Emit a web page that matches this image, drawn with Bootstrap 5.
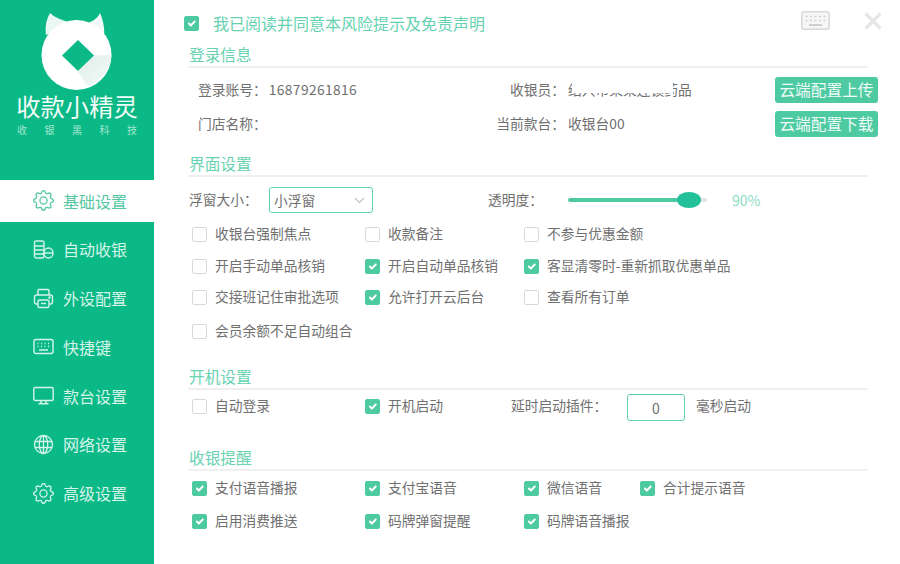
<!DOCTYPE html>
<html lang="zh-CN">
<head>
<meta charset="utf-8">
<title>基础设置</title>
<link rel="stylesheet" href="https://cdn.jsdelivr.net/npm/bootstrap@5.3.0/dist/css/bootstrap.min.css">
<style>
html,body{height:100%;margin:0;overflow:hidden;background:#fff}
body{font-family:"Noto Sans CJK SC","Liberation Sans",sans-serif;font-size:13.75px;color:#707070;font-weight:400}
.shell{width:900px;height:564px}
.side{width:154px;background:#0bb987;color:#d8f5ea}
.logo-box{height:180px;color:#eafaf4}
.logo-box svg{display:block}
.logo-name{font-size:24.3px;line-height:28px;text-align:center;color:#f2fcf8;height:28px;white-space:nowrap}
.logo-sub{font-size:10px;line-height:12px;margin-top:4px;padding:0 17px;color:#a5e6d0}
.menu-list{gap:6.75px}
.menu-row{height:42px;padding:0 0 1px 33px;gap:9px;font-size:16px;color:#d5f4e9;text-decoration:none}
.menu-row.on{background:#fff;color:#55c8a3}
.menu-row svg{width:21px;height:21px;flex:none}
.pane{padding:0 22px 0 34px}
.top-row{height:44px;padding-top:1px;margin-left:-4px}
.agree{font-size:16px;color:#66d2b0;gap:14px}
.form-check-input.tick{width:15px;height:15px;margin:2px 0 0;flex:none;border:1.5px solid #d9d9d9;border-radius:2px;background-color:#fff;box-shadow:none}
.form-check-input.tick:checked{background-color:#4dcaa2;border-color:#4dcaa2}
.tools{gap:34px;margin-right:-4px;margin-bottom:4px}
.head-line{height:24px;line-height:21px;font-size:15.7px;color:#68d2b1;border-bottom:2px solid #f0f0f0;margin-right:10px;padding-left:1px}
.login-block{margin-top:5px}
.login-row{height:34px;padding-bottom:1px}
.cell-a{width:297px;padding-left:10px}
.cell-b{width:80px;text-align:right;white-space:nowrap}
.cell-c{width:210px;padding-left:3px}
.digits{letter-spacing:.4px;margin-left:2px}
.masked{position:relative;display:inline-block}
.masked::after{content:"";position:absolute;left:4px;top:0;width:101px;height:66%;background:#fff}
.cloud-btn{width:103px;height:26px;padding:0;margin-top:1px;font-size:15.7px;line-height:26px;color:#eefbf6;background:#4dcaa2;border:0;border-radius:3px;white-space:nowrap}
.gap-ui{margin-top:12px}
.win-row{margin-top:10px;height:26px;padding-left:1px}
.win-label{width:80px;padding-bottom:1px}
.win-select{width:104px;height:26px;padding:0 22px 0 4px;font-size:13.75px;line-height:24px;color:#707070;border:1px solid #61cfad;border-radius:3px;background-image:url("data:image/svg+xml,%3csvg xmlns='http://www.w3.org/2000/svg' viewBox='0 0 16 16'%3e%3cpath fill='none' stroke='%23b5b5b5' stroke-linecap='round' stroke-width='1.5' d='m2 5 6 6 6-6'/%3e%3c/svg%3e");background-position:right 6px center;background-size:13px 11px;box-shadow:none}
.alpha-label{width:80px;margin-left:115px;padding-bottom:1px}
.alpha-range{width:139px;height:16px;padding:0;margin:0}
.alpha-range::-webkit-slider-runnable-track{height:4px;border-radius:2px;background:linear-gradient(90deg,#4dcaa2 0,#4dcaa2 88%,#e4e4e4 88%)}
.alpha-range::-webkit-slider-thumb{width:24px;height:16px;margin-top:-6px;border-radius:50%;background:#22c19a;box-shadow:none}
.alpha-num{margin-left:25px;color:#8adcc3;font-size:14px}
.opts{margin-top:5px}
.opt-row{height:32px;padding-left:4px}
.opt-row label{padding-bottom:2px}
.opt-row.up{margin-top:-1px}
.opt-row.low{height:33px;margin-top:2px}
.cell-1,.cell-2,.cell-3,.cell-4{gap:8px;white-space:nowrap;flex:none}
.cell-1{width:173px}
.cell-2{width:159px}
.cell-2.boot{width:146px}
.cell-3{width:116px}
.boot-row label,.delay-label,.delay-unit{padding-bottom:2px}
.delay-label{width:116px}
.delay-input{width:58px;height:27px;padding:0;margin-top:2px;text-align:center;font-size:14px;color:#707070;border:1px solid #61cfad;border-radius:3px;box-shadow:none}
.delay-unit{margin-left:11px}
.gap-boot{margin-top:18px}
.boot-row{margin-top:3px;padding-left:4px;height:27px}
.gap-note{margin-top:27px}
.note-rows{margin-top:1px}
</style>
</head>
<body>
<svg width="0" height="0" class="position-absolute">
<symbol id="i-gear" viewBox="0 0 16 16"><path fill="currentColor" d="M8 4.754a3.246 3.246 0 1 0 0 6.492 3.246 3.246 0 0 0 0-6.492zM5.754 8a2.246 2.246 0 1 1 4.492 0 2.246 2.246 0 0 1-4.492 0z"/><path fill="currentColor" d="M9.796 1.343c-.527-1.79-3.065-1.79-3.592 0l-.094.319a.873.873 0 0 1-1.255.52l-.292-.16c-1.64-.892-3.433.902-2.54 2.541l.159.292a.873.873 0 0 1-.52 1.255l-.319.094c-1.79.527-1.79 3.065 0 3.592l.319.094a.873.873 0 0 1 .52 1.255l-.16.292c-.892 1.64.901 3.434 2.541 2.54l.292-.159a.873.873 0 0 1 1.255.52l.094.319c.527 1.79 3.065 1.79 3.592 0l.094-.319a.873.873 0 0 1 1.255-.52l.292.16c1.64.893 3.434-.902 2.54-2.541l-.159-.292a.873.873 0 0 1 .52-1.255l.319-.094c1.79-.527 1.79-3.065 0-3.592l-.319-.094a.873.873 0 0 1-.52-1.255l.16-.292c.893-1.64-.902-3.433-2.541-2.54l-.292.159a.873.873 0 0 1-1.255-.52l-.094-.319zm-2.633.283c.246-.835 1.428-.835 1.674 0l.094.319a1.873 1.873 0 0 0 2.693 1.115l.291-.16c.764-.415 1.6.42 1.184 1.185l-.159.292a1.873 1.873 0 0 0 1.116 2.692l.318.094c.835.246.835 1.428 0 1.674l-.319.094a1.873 1.873 0 0 0-1.115 2.693l.16.291c.415.764-.42 1.6-1.185 1.184l-.291-.159a1.873 1.873 0 0 0-2.693 1.116l-.094.318c-.246.835-1.428.835-1.674 0l-.094-.319a1.873 1.873 0 0 0-2.692-1.115l-.292.16c-.764.415-1.6-.42-1.184-1.185l.159-.291A1.873 1.873 0 0 0 1.945 8.93l-.319-.094c-.835-.246-.835-1.428 0-1.674l.319-.094A1.873 1.873 0 0 0 3.06 4.377l-.16-.292c-.415-.764.42-1.6 1.185-1.184l.292.159a1.873 1.873 0 0 0 2.692-1.115l.094-.319z"/></symbol>
</svg>
<div class="shell d-flex">
  <aside class="side flex-shrink-0">
    <div class="logo-box">
      <svg width="154" height="92" viewBox="0 0 154 92" role="img" aria-label="logo">
        <defs><linearGradient id="shade" x1="0" y1="0" x2="1" y2="1"><stop offset="0" stop-color="#dfeee9"/><stop offset="1" stop-color="#f4faf8"/></linearGradient></defs>
        <path d="M50 13C46 20 45 27 46 35L74 24C66 21 56 19 50 13Z" fill="#e9f8f2"/>
        <path d="M100 13C98 18 93 21 88 23L104 36C105 28 103 20 100 13Z" fill="#f1faf6"/>
        <circle cx="76.500" cy="55" r="35" fill="#fff"/>
        <path d="M94 55.500 111.500 55C111 68 101 80 88 86L78 72Z" fill="url(#shade)"/>
        <path d="M78 40 94 55.500 78 71 62 55.500Z" fill="#0bb987"/>
      </svg>
      <div class="logo-name">收款小精灵</div>
      <div class="logo-sub d-flex justify-content-between"><span>收</span><span>银</span><span>黑</span><span>科</span><span>技</span></div>
    </div>
    <nav class="menu-list d-flex flex-column">
      <a class="menu-row on d-flex align-items-center" href="#"><svg><use href="#i-gear"/></svg>基础设置</a>
      <a class="menu-row d-flex align-items-center" href="#">
        <svg viewBox="0 0 21 21" fill="none" stroke="currentColor" stroke-width="1.4"><rect x="1.500" y="2" width="9.500" height="17" rx="2"/><path d="M1.500 7h9.500M1.500 11h9.500M1.500 15h9.500"/><ellipse cx="15.500" cy="14" rx="4.500" ry="5"/><path d="M11 14h9"/></svg>自动收银</a>
      <a class="menu-row d-flex align-items-center" href="#">
        <svg viewBox="0 0 21 21" fill="none" stroke="currentColor" stroke-width="1.4"><path d="M5 7V2.500a1 1 0 0 1 1-1h9a1 1 0 0 1 1 1V7"/><path d="M5 16H3.500a2 2 0 0 1-2-2V9a2 2 0 0 1 2-2h14a2 2 0 0 1 2 2v5a2 2 0 0 1-2 2H16"/><rect x="5" y="12" width="11" height="7.500" rx="1.500"/><path d="M8 15.500h5"/><circle cx="16.500" cy="9.500" r=".6"/></svg>外设配置</a>
      <a class="menu-row d-flex align-items-center" href="#">
        <svg viewBox="0 0 21 21" fill="none" stroke="currentColor" stroke-width="1.4"><rect x="1" y="3.500" width="19" height="14" rx="2"/><path d="M4.500 7.500h1M8 7.500h1M11.500 7.500h1M15 7.500h1M4.500 10.500h1M8 10.500h1M11.500 10.500h1M15 10.500h1M6 14h9"/></svg>快捷键</a>
      <a class="menu-row d-flex align-items-center" href="#">
        <svg viewBox="0 0 21 21" fill="none" stroke="currentColor" stroke-width="1.4"><rect x=".8" y="2.500" width="19.400" height="13" rx="1.500"/><path d="M8 15.500v3M13 15.500v3M5.500 18.700h10"/></svg>款台设置</a>
      <a class="menu-row d-flex align-items-center" href="#">
        <svg viewBox="0 0 21 21" fill="none" stroke="currentColor" stroke-width="1.3"><circle cx="10.500" cy="10.500" r="9"/><ellipse cx="10.500" cy="10.500" rx="4.200" ry="9"/><path d="M10.500 1.500v18M2 7.500h17M2 13.500h17"/></svg>网络设置</a>
      <a class="menu-row d-flex align-items-center" href="#"><svg><use href="#i-gear"/></svg>高级设置</a>
    </nav>
  </aside>

  <main class="pane flex-grow-1">
    <div class="top-row d-flex align-items-center justify-content-between">
      <label class="agree d-flex align-items-center"><input class="form-check-input tick" type="checkbox" checked>我已阅读并同意本风险提示及免责声明</label>
      <div class="tools d-flex align-items-center">
        <svg width="29" height="19" viewBox="0 0 29 19" fill="#f6f6f6" stroke="#d8d8d8" stroke-width="1.500"><rect x=".8" y=".8" width="27.400" height="17.400" rx="2.500"/><path fill="none" stroke="#cfcfcf" stroke-dasharray="2 2.500" d="M4.500 5.500h20M4.500 9.500h20"/><path fill="none" stroke="#cfcfcf" stroke-width="2" d="M8 14h13"/></svg>
        <svg width="18" height="18" viewBox="0 0 18 18" stroke="#e6e6e6" stroke-width="3.200"><path d="M1.500 1.500l15 15M16.500 1.500l-15 15"/></svg>
      </div>
    </div>

    <section>
      <div class="head-line">登录信息</div>
      <div class="login-block">
        <div class="login-row d-flex align-items-center">
          <div class="cell-a">登录账号：<span class="digits">16879261816</span></div>
          <div class="cell-b">收银员：</div>
          <div class="cell-c"><span class="masked">绍兴市某某连锁药品</span></div>
          <button class="btn cloud-btn" type="button">云端配置上传</button>
        </div>
        <div class="login-row d-flex align-items-center">
          <div class="cell-a">门店名称：</div>
          <div class="cell-b">当前款台：</div>
          <div class="cell-c">收银台00</div>
          <button class="btn cloud-btn" type="button">云端配置下载</button>
        </div>
      </div>
    </section>

    <section class="gap-ui">
      <div class="head-line">界面设置</div>
      <div class="win-row d-flex align-items-center">
        <div class="win-label">浮窗大小：</div>
        <select class="form-select win-select"><option>小浮窗</option></select>
        <div class="alpha-label">透明度：</div>
        <input class="form-range alpha-range" type="range" min="0" max="100" value="95">
        <div class="alpha-num">90%</div>
      </div>
      <div class="opts">
        <div class="opt-row d-flex align-items-center">
          <label class="cell-1 d-flex align-items-center"><input class="form-check-input tick" type="checkbox">收银台强制焦点</label>
          <label class="cell-2 d-flex align-items-center"><input class="form-check-input tick" type="checkbox">收款备注</label>
          <label class="cell-3 d-flex align-items-center"><input class="form-check-input tick" type="checkbox">不参与优惠金额</label>
        </div>
        <div class="opt-row d-flex align-items-center">
          <label class="cell-1 d-flex align-items-center"><input class="form-check-input tick" type="checkbox">开启手动单品核销</label>
          <label class="cell-2 d-flex align-items-center"><input class="form-check-input tick" type="checkbox" checked>开启自动单品核销</label>
          <label class="cell-3 d-flex align-items-center"><input class="form-check-input tick" type="checkbox" checked>客显清零时-重新抓取优惠单品</label>
        </div>
        <div class="opt-row up d-flex align-items-center">
          <label class="cell-1 d-flex align-items-center"><input class="form-check-input tick" type="checkbox">交接班记住审批选项</label>
          <label class="cell-2 d-flex align-items-center"><input class="form-check-input tick" type="checkbox" checked>允许打开云后台</label>
          <label class="cell-3 d-flex align-items-center"><input class="form-check-input tick" type="checkbox">查看所有订单</label>
        </div>
        <div class="opt-row low d-flex align-items-center">
          <label class="cell-1 d-flex align-items-center"><input class="form-check-input tick" type="checkbox">会员余额不足自动组合</label>
        </div>
      </div>
    </section>

    <section class="gap-boot">
      <div class="head-line">开机设置</div>
      <div class="boot-row d-flex align-items-center">
        <label class="cell-1 d-flex align-items-center"><input class="form-check-input tick" type="checkbox">自动登录</label>
        <label class="cell-2 boot d-flex align-items-center"><input class="form-check-input tick" type="checkbox" checked>开机启动</label>
        <div class="delay-label">延时启动插件：</div>
        <input class="form-control delay-input" type="text" value="0">
        <div class="delay-unit">毫秒启动</div>
      </div>
    </section>

    <section class="gap-note">
      <div class="head-line">收银提醒</div>
      <div class="note-rows">
        <div class="opt-row low d-flex align-items-center mt-0">
          <label class="cell-1 d-flex align-items-center"><input class="form-check-input tick" type="checkbox" checked>支付语音播报</label>
          <label class="cell-2 d-flex align-items-center"><input class="form-check-input tick" type="checkbox" checked>支付宝语音</label>
          <label class="cell-3 d-flex align-items-center"><input class="form-check-input tick" type="checkbox" checked>微信语音</label>
          <label class="cell-4 d-flex align-items-center"><input class="form-check-input tick" type="checkbox" checked>合计提示语音</label>
        </div>
        <div class="opt-row low d-flex align-items-center mt-0">
          <label class="cell-1 d-flex align-items-center"><input class="form-check-input tick" type="checkbox" checked>启用消费推送</label>
          <label class="cell-2 d-flex align-items-center"><input class="form-check-input tick" type="checkbox" checked>码牌弹窗提醒</label>
          <label class="cell-3 d-flex align-items-center"><input class="form-check-input tick" type="checkbox" checked>码牌语音播报</label>
        </div>
      </div>
    </section>
  </main>
</div>
<script src="https://cdn.jsdelivr.net/npm/bootstrap@5.3.0/dist/js/bootstrap.bundle.min.js"></script>
</body>
</html>
